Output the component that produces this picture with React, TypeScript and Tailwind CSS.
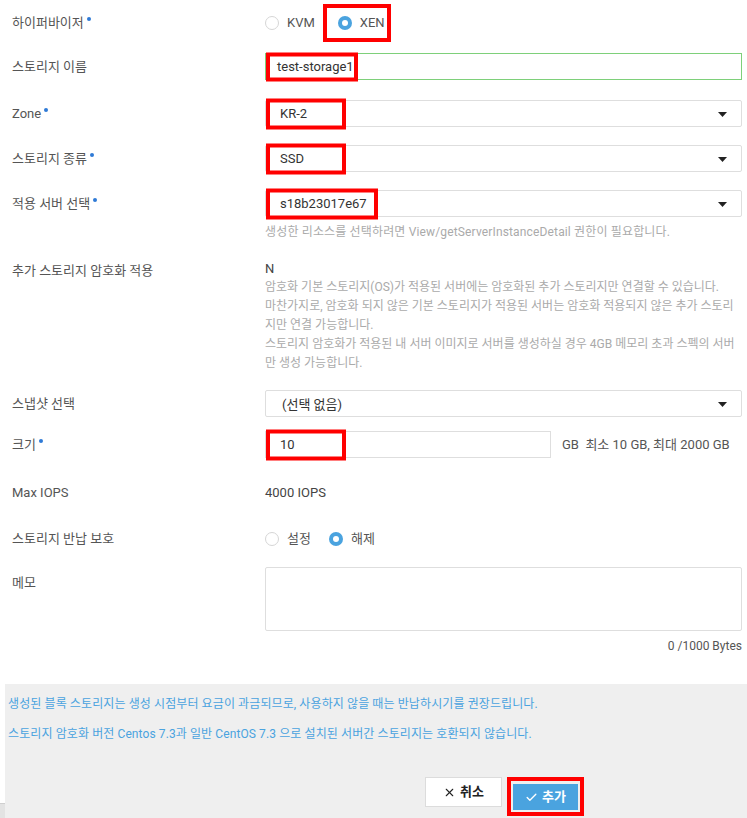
import { Check, X } from 'lucide-react';

const font = "font-['Roboto','Noto_Sans_CJK_KR',sans-serif]";

function Dot() {
  return <span className="ml-[3px] inline-block h-[4px] w-[4px] -translate-y-[6px] rounded-full bg-[#2f7ad6]" />;
}

function Radio({ checked }: { checked?: boolean }) {
  return checked ? (
    <span className="flex h-[14px] w-[14px] items-center justify-center rounded-full bg-[#4aa3df]">
      <span className="h-[6px] w-[6px] rounded-full bg-white" />
    </span>
  ) : (
    <span className="h-[14px] w-[14px] rounded-full border border-[#d6d6d6] bg-white" />
  );
}

function Marked({ children, className = '' }: { children: React.ReactNode; className?: string }) {
  // 빨간 표시 박스
  return (
    <span className={`absolute left-0 top-1/2 flex -translate-y-1/2 items-center whitespace-nowrap border-4 border-[#ff0000] bg-white ${className}`}>
      {children}
    </span>
  );
}

function Caret() {
  return (
    <svg width="9" height="5" viewBox="0 0 9 5" className="absolute right-[14px] top-[11px]">
      <path d="M0 0h9L4.5 5z" fill="#222" />
    </svg>
  );
}

function Select({ value, marked, markW }: { value: string; marked?: boolean; markW?: string }) {
  return (
    <div className="relative h-[27px] w-full rounded-[2px] border border-[#dedede] bg-white">
      {marked ? (
        <Marked className={`h-[31px] ${markW ?? ''} pl-[10px]`}>
          <span className="text-[13px] text-[#333]">{value}</span>
        </Marked>
      ) : (
        <span className="absolute left-[16px] top-[4px] text-[13px] text-[#333]">{value}</span>
      )}
      <Caret />
    </div>
  );
}

function Row({ label, dot, children, className = '', labelClass = '' }: {
  label: string;
  dot?: boolean;
  children: React.ReactNode;
  className?: string;
  labelClass?: string;
}) {
  return (
    <div className={`flex ${className}`}>
      <div className={`w-[253px] shrink-0 text-[13px] text-[#555] ${labelClass}`}>
        {label}
        {dot && <Dot />}
      </div>
      <div className="flex-1">{children}</div>
    </div>
  );
}

export default function App() {
  return (
    <div className={`${font} relative h-[818px] w-[747px] overflow-hidden bg-white`}>
      <div className="pl-[12px] pr-[5px]">
        {/* 하이퍼바이저 */}
        <Row label="하이퍼바이저" dot className="mt-[4px] h-[38px] items-center">
          <div className="flex items-center">
            <div className="flex items-center gap-[8px] text-[13px] text-[#555]">
              <Radio />
              <span>KVM</span>
            </div>
            <div className="ml-[8px] flex h-[38px] w-[68px] items-center gap-[8px] border-4 border-[#ff0000] pl-[11px] text-[13px] text-[#555]">
              <Radio checked />
              <span>XEN</span>
            </div>
          </div>
        </Row>

        <Row label="스토리지 이름" className="mt-[11px] items-center">
          <div className="relative h-[27px] w-full border border-[#7ed07a] bg-white">
            <Marked className="h-[29px] w-[92px] pl-[7px]">
              <span className="text-[13px] text-[#333]">test-storage1</span>
            </Marked>
          </div>
        </Row>

        <Row label="Zone" dot className="mt-[20px] items-center">
          <Select value="KR-2" marked markW="w-[80px]" />
        </Row>

        <Row label="스토리지 종류" dot className="mt-[18px] items-center">
          <Select value="SSD" marked markW="w-[80px]" />
        </Row>

        <Row label="적용 서버 선택" dot className="mt-[18px] items-center">
          <Select value="s18b23017e67" marked markW="w-[112px]" />
        </Row>
        <div className="ml-[253px] mt-[8px] text-[12px] leading-[15px] tracking-[0.15px] text-[#aaa]">
          생성한 리소스를 선택하려면 View/getServerInstanceDetail 권한이 필요합니다.
        </div>

        <Row label="추가 스토리지 암호화 적용" className="mt-[19px]" labelClass="pt-[2px] leading-[19px]">
          <div className="text-[12px] leading-[19px]">
            <div className="text-[13px] text-[#444]">N</div>
            <div className="text-[#aaa]">
              암호화 기본 스토리지(OS)가 적용된 서버에는 암호화된 추가 스토리지만 연결할 수 있습니다.
              <br />
              마찬가지로, 암호화 되지 않은 기본 스토리지가 적용된 서버는 암호화 적용되지 않은 추가 스토리지만 연결 가능합니다.
              <br />
              스토리지 암호화가 적용된 내 서버 이미지로 서버를 생성하실 경우 4GB 메모리 초과 스펙의 서버만 생성 가능합니다.
            </div>
          </div>
        </Row>

        <Row label="스냅샷 선택" className="mt-[17px] items-center">
          <Select value="(선택 없음)" />
        </Row>

        <Row label="크기" dot className="mt-[14px] items-center">
          <div className="flex items-center">
            <div className="relative h-[27px] w-[286px] border border-[#dedede] bg-white">
              <Marked className="h-[31px] w-[80px] pl-[10px]">
                <span className="text-[13px] text-[#333]">10</span>
              </Marked>
            </div>
            <span className="ml-[11px] text-[13px] text-[#555]">GB&nbsp; 최소 10 GB, 최대 2000 GB</span>
          </div>
        </Row>

        <Row label="Max IOPS" className="mt-[24px] items-center leading-[19px]">
          <span className="text-[13px] text-[#444]">4000 IOPS</span>
        </Row>

        <Row label="스토리지 반납 보호" className="mt-[27px] items-center leading-[19px]">
          <div className="flex items-center text-[13px] text-[#555]">
            <div className="flex items-center gap-[8px]">
              <Radio />
              <span>설정</span>
            </div>
            <div className="ml-[18px] flex items-center gap-[8px]">
              <Radio checked />
              <span>해제</span>
            </div>
          </div>
        </Row>

        <Row label="메모" className="mt-[19px]" labelClass="pt-[6px]">
          <div className="h-[64px] w-full rounded-[2px] border border-[#dedede] bg-white" />
        </Row>
        <div className="mt-[6px] text-right text-[12px] leading-[19px] text-[#555]">0 /1000 Bytes</div>
      </div>

      {/* 하단 안내 */}
      <div className="ml-[5px] mt-[28px] h-[140px] bg-[#efefef] pl-[3px] pt-[13px]">
        <p className="text-[12px] leading-[15px] tracking-[0.1px] text-[#4aa3df]">
          생성된 블록 스토리지는 생성 시점부터 요금이 과금되므로, 사용하지 않을 때는 반납하시기를 권장드립니다.
        </p>
        <p className="mt-[15px] text-[12px] leading-[15px] tracking-[0.1px] text-[#4aa3df]">
          스토리지 암호화 버전 Centos 7.3과 일반 CentOS 7.3 으로 설치된 서버간 스토리지는 호환되지 않습니다.
        </p>
        <div className="ml-[417px] mt-[35px] flex items-start">
          <button className="flex h-[30px] w-[77px] items-center justify-center gap-[4px] border border-[#dcdcdc] bg-white text-[13px] font-bold text-[#222]">
            <X className="h-[13px] w-[13px]" strokeWidth={2} />
            취소
          </button>
          <div className="ml-[5px] h-[39px] w-[77px] border-4 border-[#ff0000] bg-[#efefef] p-[2px] pt-[3px]">
            <button className="flex h-[26px] w-full items-center justify-center gap-[4px] bg-[#4aa3df] text-[13px] font-bold text-white">
              <Check className="h-[13px] w-[13px]" strokeWidth={2.5} />
              추가
            </button>
          </div>
        </div>
      </div>
      <div className="absolute bottom-0 left-0 h-[15px] w-[5px] border-t border-[#cfcfcf] bg-[#e3e3e3]" />
    </div>
  );
}
